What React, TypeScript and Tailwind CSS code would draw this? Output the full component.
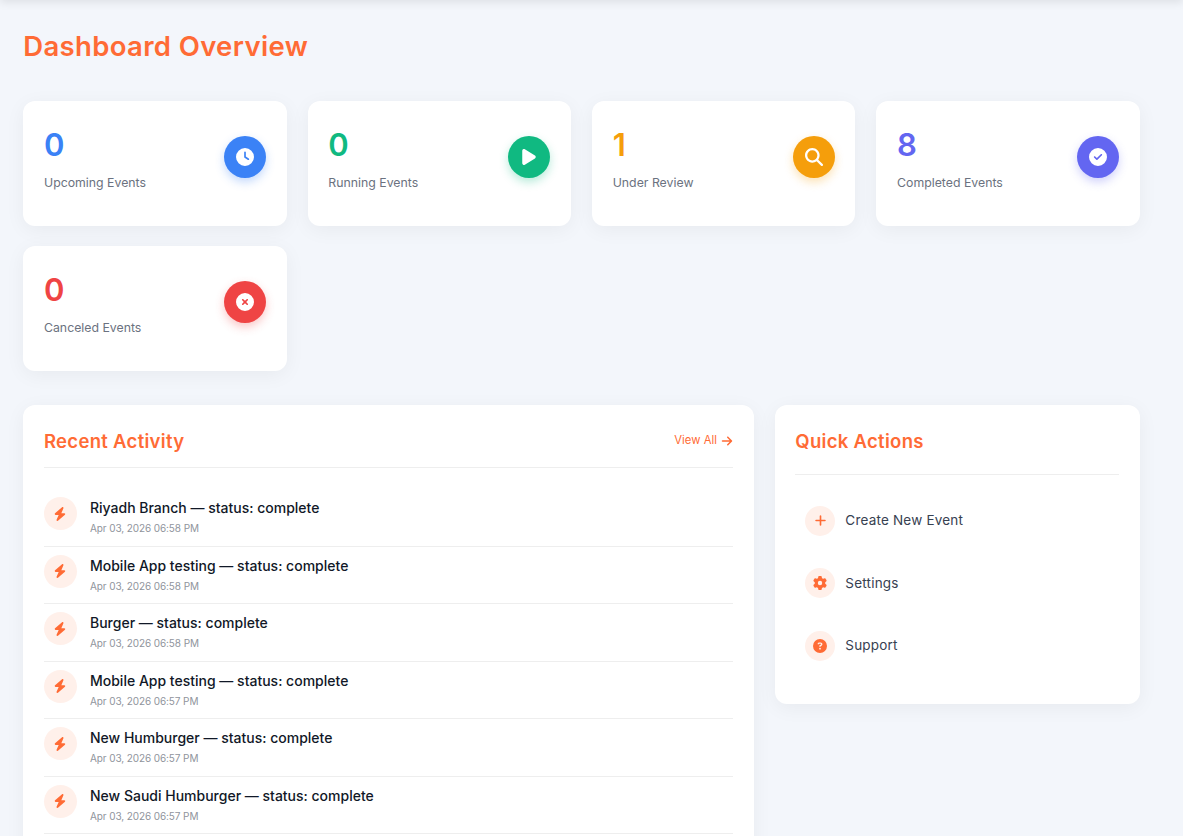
import React from "react";
import {
  FaArrowRight,
  FaBolt,
  FaCircleCheck,
  FaCircleQuestion,
  FaCircleXmark,
  FaClock,
  FaGear,
  FaMagnifyingGlass,
  FaPlay,
  FaPlus,
} from "react-icons/fa6";

const stats = [
  { value: "0", label: "Upcoming Events", text: "text-[#3b82f6]", circle: "bg-[#3b82f6] shadow-[0_4px_10px_rgba(59,130,246,0.3)]", icon: <FaClock size={18} /> },
  { value: "0", label: "Running Events", text: "text-[#10b981]", circle: "bg-[#10b981] shadow-[0_4px_10px_rgba(16,185,129,0.3)]", icon: <FaPlay size={18} /> },
  { value: "1", label: "Under Review", text: "text-[#f59e0b]", circle: "bg-[#f59e0b] shadow-[0_4px_10px_rgba(245,158,11,0.3)]", icon: <FaMagnifyingGlass size={18} /> },
  { value: "8", label: "Completed Events", text: "text-[#6366f1]", circle: "bg-[#6366f1] shadow-[0_4px_10px_rgba(99,102,241,0.3)]", icon: <FaCircleCheck size={18} /> },
  { value: "0", label: "Canceled Events", text: "text-[#ef4444]", circle: "bg-[#ef4444] shadow-[0_4px_10px_rgba(239,68,68,0.3)]", icon: <FaCircleXmark size={18} /> },
];

const activity = [
  { title: "Riyadh Branch — status: complete", date: "Apr 03, 2026 06:58 PM" },
  { title: "Mobile App testing — status: complete", date: "Apr 03, 2026 06:58 PM" },
  { title: "Burger — status: complete", date: "Apr 03, 2026 06:58 PM" },
  { title: "Mobile App testing — status: complete", date: "Apr 03, 2026 06:57 PM" },
  { title: "New Humburger — status: complete", date: "Apr 03, 2026 06:57 PM" },
  { title: "New Saudi Humburger — status: complete", date: "Apr 03, 2026 06:57 PM" },
];

const actions = [
  { label: "Create New Event", icon: <FaPlus size={13} /> },
  { label: "Settings", icon: <FaGear size={14} /> },
  { label: "Support", icon: <FaCircleQuestion size={14} /> },
];

export default function App() {
  return (
    <div className="h-[836px] overflow-hidden bg-[#f3f6fb] font-['Inter','Noto_Sans',sans-serif]">
      {/* top bar sits just above the page, only its shadow shows */}
      <div className="-mt-[10px] h-[10px] bg-white shadow-[0_2px_10px_rgba(0,0,0,0.1)]" />
      <div className="pl-[23.2px] pr-[43.2px] pt-[23.5px]">
        <h1 className="text-[27.5px] font-semibold leading-[44px] tracking-[0.35px] text-[#ff6b35]">
          Dashboard Overview
        </h1>

        <div className="mt-[33.5px] grid grid-cols-4 gap-x-[20.8px] gap-y-[20px]">
          {stats.map((s) => (
            <div
              key={s.label}
              className="flex h-[125px] items-center justify-between rounded-xl bg-white px-[20.8px] pb-[13px] shadow-[0_4px_20px_rgba(0,0,0,0.05)]"
            >
              <div>
                <div className={`text-[31px] font-semibold leading-[47px] ${s.text}`}>{s.value}</div>
                <div className="mt-[5px] text-[12.3px] leading-[20px] text-[#6b7280]">{s.label}</div>
              </div>
              <div className={`flex h-[42px] w-[42px] items-center justify-center rounded-full text-white ${s.circle}`}>
                {s.icon}
              </div>
            </div>
          ))}
        </div>

        <div className="mt-[34px] grid grid-cols-[2fr_1fr] items-start gap-[20.8px]">
          <div className="rounded-xl bg-white p-[20.8px] shadow-[0_4px_20px_rgba(0,0,0,0.05)]">
            <div className="flex items-center justify-between border-b border-[#eeeeee] pb-[11px]">
              <h2 className="text-[18.5px] font-semibold leading-[30px] tracking-[0.3px] text-[#ff6b35]">Recent Activity</h2>
              <a className="flex items-center gap-[4px] text-[11.3px] text-[#ff6b35]">
                View All <FaArrowRight size={12} />
              </a>
            </div>
            <div className="mt-[21.4px]">
              {activity.map((a, i) => (
                <div key={i} className="flex h-[57.5px] gap-[13px] border-b border-[#eeeeee] pt-[8px]">
                  <div className="flex h-[33px] w-[33px] shrink-0 items-center justify-center rounded-full bg-[#fff0ea] text-[#ff6b35]">
                    <FaBolt size={14} />
                  </div>
                  <div>
                    <div className="text-[14px] font-medium leading-[21px] text-[#111827]">{a.title}</div>
                    <div className="text-[10px] leading-[21px] tracking-[-0.1px] text-[#8f949c]">{a.date}</div>
                  </div>
                </div>
              ))}
            </div>
          </div>

          <div className="rounded-xl bg-white px-[20.8px] pb-[27px] pt-[20.8px] shadow-[0_4px_20px_rgba(0,0,0,0.05)]">
            <div className="border-b border-[#eeeeee] pb-[18px]">
              <h2 className="text-[18.5px] font-semibold leading-[30px] tracking-[0.3px] text-[#ff6b35]">Quick Actions</h2>
            </div>
            <div className="mt-[14.5px]">
              {actions.map((a) => (
                <div key={a.label} className="flex h-[62.5px] items-center gap-[10px] pl-[10px]">
                  <div className="flex h-[30px] w-[30px] items-center justify-center rounded-full bg-[#fff0ea] text-[#ff6b35]">
                    {a.icon}
                  </div>
                  <span className="text-[13.5px] tracking-[0.2px] text-[#374151]">{a.label}</span>
                </div>
              ))}
            </div>
          </div>
        </div>
      </div>
    </div>
  );
}
